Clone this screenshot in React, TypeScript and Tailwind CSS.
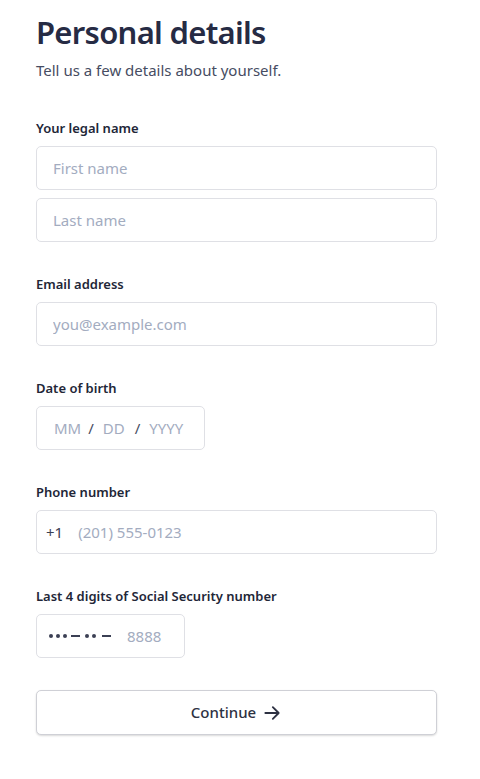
import React from "react";

const font = { fontFamily: '"Noto Sans", "Open Sans", sans-serif' };

function Label({ children }: { children: React.ReactNode }) {
  return <div className="text-[13px] font-semibold text-[#222637] leading-[18px] mb-[9px]">{children}</div>;
}

function Input({ placeholder, className = "" }: { placeholder: string; className?: string }) {
  return (
    <input
      placeholder={placeholder}
      className={`h-[44px] border border-[#dfe0e5] rounded-[5px] px-[16px] text-[15px] text-[#1f2433] placeholder-[#a3acbf] outline-none bg-white ${className}`}
      style={font}
    />
  );
}

function Dot() {
  return <span className="block w-[4px] h-[4px] rounded-full bg-[#3b4054]" />;
}

function Dash() {
  return <span className="block w-[9px] h-[1.5px] bg-[#3b4054]" />;
}

export default function App() {
  return (
    <div className="bg-white min-h-[779px] px-[36px] pt-[12px]" style={font}>
      <h1 className="text-[31px] font-semibold text-[#262b44] leading-[40px] tracking-[-0.7px]">Personal details</h1>
      <p className="text-[15px] text-[#464c62] mt-[8px] leading-[20px]">Tell us a few details about yourself.</p>

      <div className="mt-[39px]">
        <Label>Your legal name</Label>
        <div className="flex flex-col gap-[8px] w-[401px]">
          <Input placeholder="First name" />
          <Input placeholder="Last name" />
        </div>
      </div>

      <div className="mt-[33px]">
        <Label>Email address</Label>
        <Input placeholder="you@example.com" className="w-[401px]" />
      </div>

      <div className="mt-[33px]">
        <Label>Date of birth</Label>
        <div className="h-[44px] w-[169px] border border-[#dfe0e5] rounded-[5px] flex items-center pl-[17px] text-[15px] text-[#a3acbf]">
          <span>MM</span>
          <span className="ml-[7px] text-[#464c62]">/</span>
          <span className="ml-[9px]">DD</span>
          <span className="ml-[10px] text-[#464c62]">/</span>
          <span className="ml-[9px]">YYYY</span>
        </div>
      </div>

      <div className="mt-[33px]">
        <Label>Phone number</Label>
        <div className="h-[44px] w-[401px] border border-[#dfe0e5] rounded-[5px] flex items-center pl-[9px] text-[15px]">
          <span className="text-[#3b4054]">+1</span>
          <span className="ml-[15px] text-[#a3acbf]">(201) 555-0123</span>
        </div>
      </div>

      <div className="mt-[33px]">
        <Label>Last 4 digits of Social Security number</Label>
        <div className="h-[44px] w-[149px] border border-[#dfe0e5] rounded-[5px] flex items-center pl-[12px] text-[15px]">
          <span className="flex gap-[3px]"><Dot /><Dot /><Dot /></span>
          <span className="ml-[4px]"><Dash /></span>
          <span className="flex gap-[3px] ml-[5px]"><Dot /><Dot /></span>
          <span className="ml-[6px]"><Dash /></span>
          <span className="ml-[16px] text-[#a3acbf]">8888</span>
        </div>
      </div>

      <button className="mt-[32px] h-[45px] w-[401px] border border-[#cfd0d6] rounded-[5px] bg-white shadow-[0_1px_2px_rgba(0,0,0,0.15)] flex items-center justify-center gap-[6px] text-[15px] font-medium text-[#2d3142]">
        <span>Continue</span>
        <svg width="20" height="20" viewBox="0 0 24 24" fill="none" stroke="#2d3142" strokeWidth="2.2" strokeLinecap="round" strokeLinejoin="round">
          <path d="M4 12h16M13 5l7 7-7 7" />
        </svg>
      </button>
    </div>
  );
}
